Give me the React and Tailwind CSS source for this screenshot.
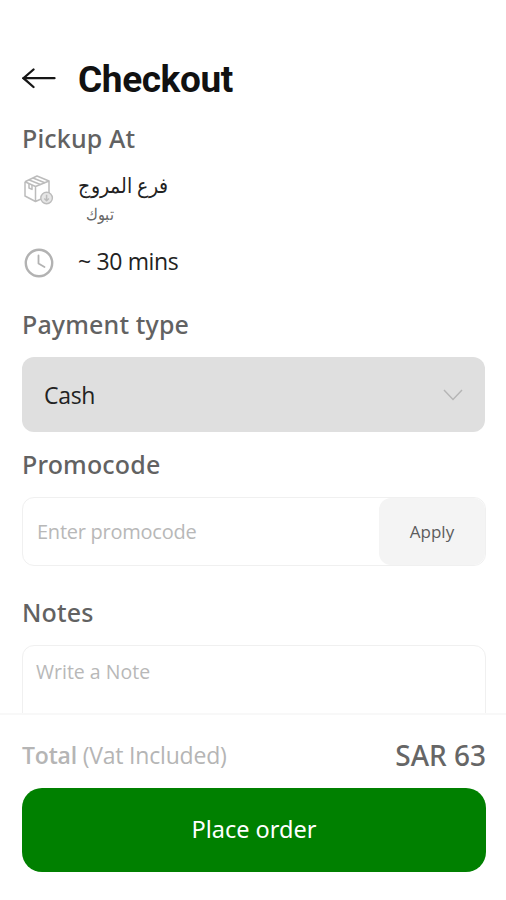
import React, { useState } from "react";

function ArrowLeft() {
  return (
    <svg width="34" height="22" viewBox="0 0 34 22" fill="none" stroke="#161616" strokeWidth="2.3" strokeLinecap="round">
      <path d="M1.5 10.2H32.5" />
      <path d="M11.5 1.5L1.5 10.2L11.5 19" />
    </svg>
  );
}

function BoxIcon() {
  return (
    <svg width="30" height="30" viewBox="0 0 30 30" fill="none" stroke="#bcbcbc" strokeWidth="1.5" strokeLinejoin="round">
      <path d="M1 6.8L13 1L25 6L25 18.5M1 6.8V21L11.5 26.5L17 24M1 6.8L11.5 11.5L25 6M11.5 11.5V26.5" />
      <path d="M5.2 5L16.5 9.5M9 3L20.8 7.8M5 8.6V13L8 14.4V10" />
      <circle cx="22.6" cy="23" r="5.8" fill="#e6e6e6" strokeWidth="1.4" />
      <path d="M22.6 19.8V25.5M20.3 23.5L22.6 25.7L24.9 23.5" />
    </svg>
  );
}

function ClockIcon() {
  return (
    <svg width="30" height="30" viewBox="0 0 30 30" fill="none" stroke="#b2b2b2" strokeWidth="2.4" strokeLinecap="round" strokeLinejoin="round">
      <circle cx="15" cy="15" r="13.2" />
      <path d="M14.5 7.5V15.5L20.5 19" strokeWidth="1.8" />
    </svg>
  );
}

function SectionTitle({ children }) {
  return (
    <h2 className="font-['Noto_Sans',sans-serif] text-[25px] leading-9 font-medium tracking-[0.16px] text-[#626262]">
      {children}
    </h2>
  );
}

export default function App() {
  const [promocode, setPromocode] = useState("");
  const [note, setNote] = useState("");

  return (
    <div className="flex h-[900px] w-full flex-col overflow-hidden bg-white font-['Open_Sans','Noto_Sans',sans-serif]">
      <main className="min-h-0 flex-1 overflow-hidden px-[22px] pt-[58px]">
        <header className="flex h-[42px] items-center">
          <button type="button" aria-label="Back" className="w-14">
            <ArrowLeft />
          </button>
          <h1 className="pt-0.5 font-['Roboto',sans-serif] text-[37px] leading-[42px] font-bold tracking-[-0.4px] text-[#111]">
            Checkout
          </h1>
        </header>

        <section className="mt-5">
          <SectionTitle>Pickup At</SectionTitle>
          <div className="mt-3 flex h-[62px]">
            <div className="w-14 pt-[7px] pl-0.5">
              <BoxIcon />
            </div>
            <div dir="rtl" className="flex origin-left scale-x-90 flex-col">
              <p className="text-[21px] leading-[34px] text-[#222]">فرع المروج</p>
              <p className="self-end pl-[9px] text-[15.5px] leading-6 text-[#666]">تبوك</p>
            </div>
          </div>
          <div className="mt-3 flex h-[38px] items-center">
            <div className="w-14 pt-[3px] pl-0.5">
              <ClockIcon />
            </div>
            <p className="text-[23px] leading-8 tracking-[-0.35px] text-[#222]">~ 30 mins</p>
          </div>
        </section>

        <section className="mt-[26px]">
          <SectionTitle>Payment type</SectionTitle>
          <button
            type="button"
            className="mt-[15px] flex h-[75px] w-[463px] items-center justify-between rounded-xl bg-[#dfdfdf] px-[22px]"
          >
            <span className="text-[23px] leading-8 tracking-[-0.3px] text-[#222]">Cash</span>
            <svg width="20" height="12" viewBox="0 0 20 12" fill="none" stroke="#b5b5b5" strokeWidth="1.4">
              <path d="M1 1L10 10.5L19 1" />
            </svg>
          </button>
        </section>

        <section className="mt-3.5">
          <SectionTitle>Promocode</SectionTitle>
          <div className="mt-[15px] flex h-[69px] w-[464px] rounded-xl border border-[#f0f0f0]">
            <input
              value={promocode}
              onChange={(e) => setPromocode(e.target.value)}
              placeholder="Enter promocode"
              className="min-w-0 flex-1 px-3.5 text-[20px] tracking-[-0.25px] text-[#222] outline-none placeholder:text-[#b8b8b8]"
            />
            <button type="button" className="w-[106px] rounded-xl bg-[#f4f4f4] text-[17px] text-[#5c5c5c]">
              Apply
            </button>
          </div>
        </section>

        <section className="mt-7">
          <SectionTitle>Notes</SectionTitle>
          <textarea
            value={note}
            onChange={(e) => setNote(e.target.value)}
            placeholder="Write a Note"
            className="mt-[15px] block h-[120px] w-[464px] resize-none rounded-xl border border-[#f0f0f0] px-[13px] pt-3 text-[19.5px] leading-7 text-[#222] outline-none placeholder:text-[#b8b8b8]"
          />
        </section>
      </main>

      <footer className="h-[187px] shrink-0 border-t-2 border-[#f8f8f8] bg-white px-[22px] pt-[21px]">
        <div className="flex h-10 w-[464px] items-center justify-between whitespace-nowrap">
          <p className="pb-0.5 text-[23px] leading-9 tracking-[-0.2px] text-[#b5b5b5]">
            <span className="font-semibold">Total</span> (Vat Included)
          </p>
          <p className="pb-0.5 font-['Noto_Sans',sans-serif] text-[28px] leading-[38px] font-medium text-[#666]">
            SAR 63
          </p>
        </div>
        <button
          type="button"
          className="mt-3 h-[84px] w-[464px] rounded-[20px] bg-[#008000] font-['Noto_Sans',sans-serif] text-[23.5px] text-white"
        >
          Place order
        </button>
      </footer>
    </div>
  );
}
